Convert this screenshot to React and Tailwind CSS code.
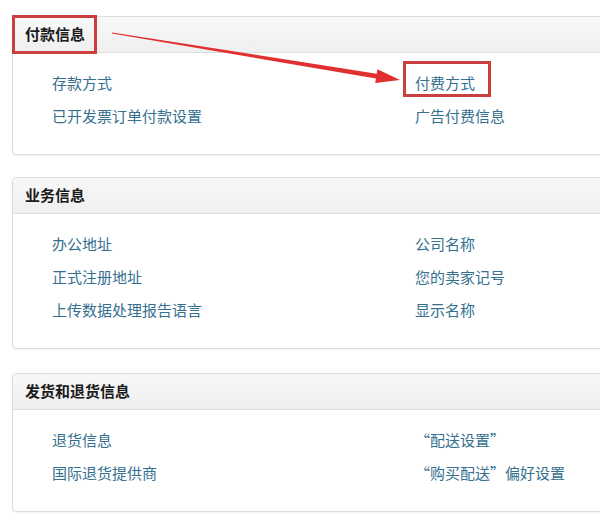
import React from "react";

const font = { fontFamily: '"Noto Sans CJK SC", "Noto Sans", sans-serif' };

function Card({ title, left, right, titleBox = false, boxRight = null, className = "" }) {
  const rows = Math.max(left.length, right.length);
  return (
    <div className={"-mr-5 rounded-[4px] border border-[#dddddd] bg-white shadow-[0_1px_2px_rgba(0,0,0,0.06)] " + className}>
      <div className="relative flex h-[36px] items-center rounded-t-[4px] border-b border-[#dddddd] bg-gradient-to-b from-[#f8f8f8] to-[#efefef] px-3">
        <span className="text-[15px] font-bold text-[#1b1b1b]">{title}</span>
        {titleBox && (
          <div className="absolute left-[-1px] top-[-2px] h-[39px] w-[85px] border-[3px] border-[#c9403e]" />
        )}
      </div>
      <div className="grid grid-cols-[363px_1fr] pl-[39px] pt-[13px] pb-[22px]">
        {Array.from({ length: rows }).map((_, i) => (
          <React.Fragment key={i}>
            <div className="h-[33px] text-[15px] leading-[33px] text-[#35708f]">{left[i] || ""}</div>
            <div className="relative h-[33px] text-[15px] leading-[33px] text-[#35708f]">
              {right[i] || ""}
              {boxRight === i && (
                <div className="absolute left-[-12px] top-[-5px] h-[36px] w-[88px] border-[3px] border-[#c9403e]" />
              )}
            </div>
          </React.Fragment>
        ))}
      </div>
    </div>
  );
}

export default function App() {
  return (
    <div className="relative h-[525px] w-[600px] overflow-hidden bg-white pl-3 pt-4" style={font}>
      <Card
        title="付款信息"
        titleBox
        boxRight={0}
        left={["存款方式", "已开发票订单付款设置"]}
        right={["付费方式", "广告付费信息"]}
        className="mb-[22px]"
      />
      <Card
        title="业务信息"
        left={["办公地址", "正式注册地址", "上传数据处理报告语言"]}
        right={["公司名称", "您的卖家记号", "显示名称"]}
        className="mb-[24px]"
      />
      <Card
        title="发货和退货信息"
        left={["退货信息", "国际退货提供商"]}
        right={["“配送设置”", "“购买配送”偏好设置"]}
      />
      <svg className="pointer-events-none absolute left-0 top-0" width="600" height="525" viewBox="0 0 600 525">
        <polygon
          fill="#e0302f"
          points="112.08,32.51 376.7,73.63 377.43,69.2 400,80 375.17,83.0 375.9,78.57 111.92,33.49"
        />
      </svg>
    </div>
  );
}
